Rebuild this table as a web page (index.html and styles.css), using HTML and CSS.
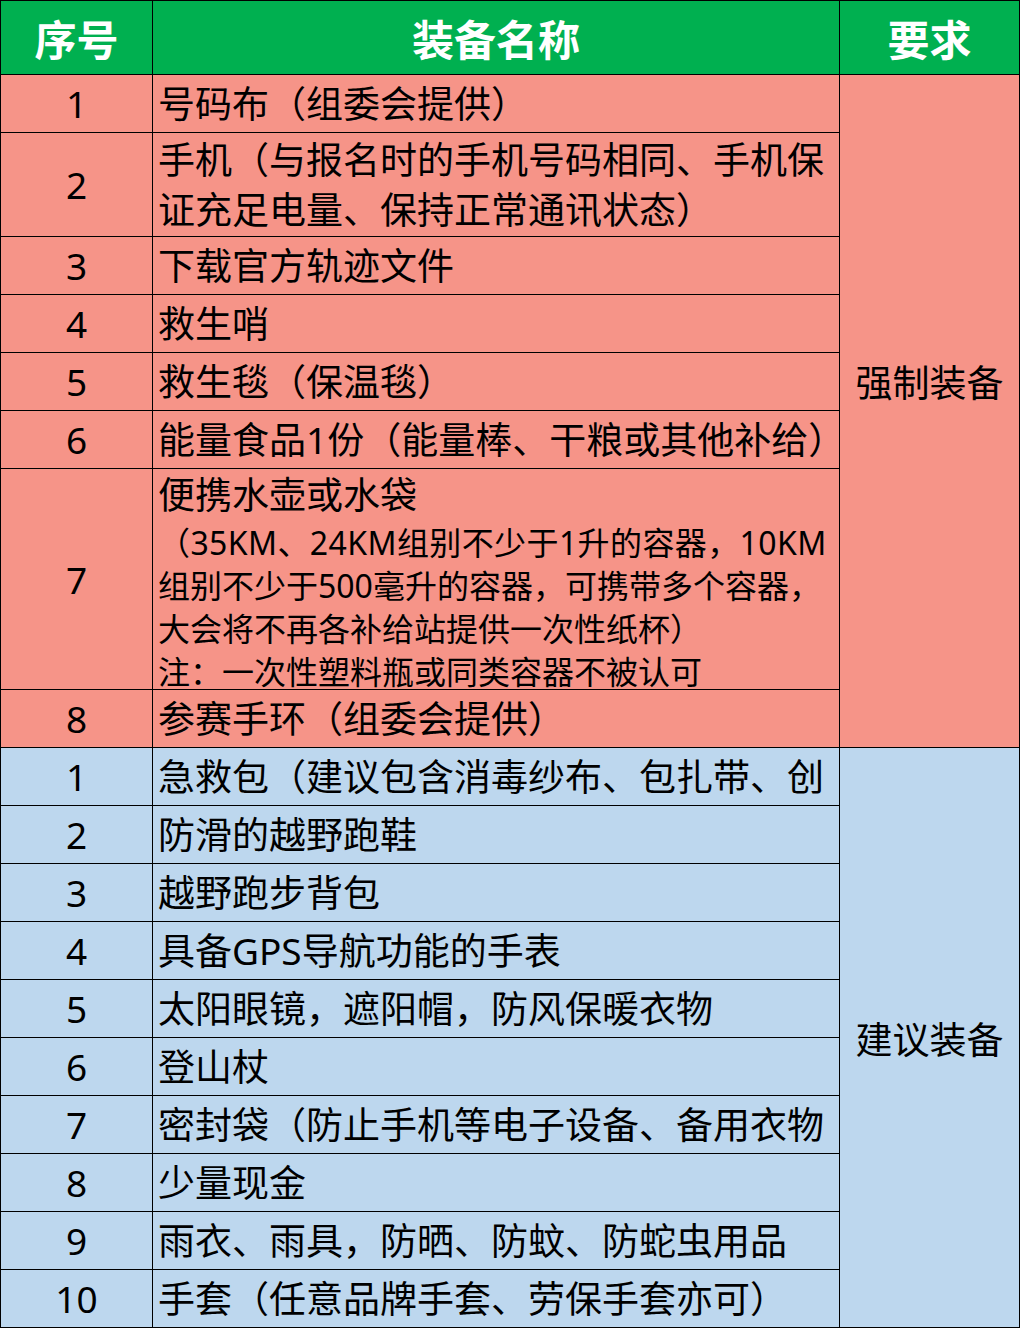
FILE: index.html
```html
<!DOCTYPE html>
<html lang="zh-CN">
<head>
<meta charset="utf-8">
<title>装备清单</title>
<link rel="stylesheet" href="styles.css">
</head>
<body>
<div class="sheet">
  <div class="hd">序号</div>
  <div class="hd">装备名称</div>
  <div class="hd">要求</div>

  <div class="num red">1</div>
  <div class="name red">号码布（组委会提供）</div>
  <div class="req red req-must">强制装备</div>

  <div class="num red">2</div>
  <div class="name red multi">手机（与报名时的手机号码相同、手机保<br>证充足电量、保持正常通讯状态）</div>

  <div class="num red">3</div>
  <div class="name red">下载官方轨迹文件</div>

  <div class="num red">4</div>
  <div class="name red">救生哨</div>

  <div class="num red">5</div>
  <div class="name red">救生毯（保温毯）</div>

  <div class="num red">6</div>
  <div class="name red">能量食品1份（能量棒、干粮或其他补给）</div>

  <div class="num red">7</div>
  <div class="name red long">
    <div class="l1">便携水壶或水袋</div>
    <div class="ls wide">（35KM、24KM组别不少于1升的容器，10KM</div>
    <div class="ls">组别不少于500毫升的容器，可携带多个容器，</div>
    <div class="ls">大会将不再各补给站提供一次性纸杯）</div>
    <div class="ls">注：一次性塑料瓶或同类容器不被认可</div>
  </div>

  <div class="num red">8</div>
  <div class="name red">参赛手环（组委会提供）</div>

  <div class="num blue">1</div>
  <div class="name blue">急救包（建议包含消毒纱布、包扎带、创</div>
  <div class="req blue">建议装备</div>

  <div class="num blue">2</div>
  <div class="name blue">防滑的越野跑鞋</div>

  <div class="num blue">3</div>
  <div class="name blue">越野跑步背包</div>

  <div class="num blue">4</div>
  <div class="name blue">具备GPS导航功能的手表</div>

  <div class="num blue">5</div>
  <div class="name blue">太阳眼镜，遮阳帽，防风保暖衣物</div>

  <div class="num blue">6</div>
  <div class="name blue">登山杖</div>

  <div class="num blue">7</div>
  <div class="name blue">密封袋（防止手机等电子设备、备用衣物</div>

  <div class="num blue">8</div>
  <div class="name blue">少量现金</div>

  <div class="num blue">9</div>
  <div class="name blue">雨衣、雨具，防晒、防蚊、防蛇虫用品</div>

  <div class="num blue">10</div>
  <div class="name blue">手套（任意品牌手套、劳保手套亦可）</div>
</div>
</body>
</html>
```

FILE: styles.css
```css
html, body {
  margin: 0;
  padding: 0;
  background: #ffffff;
}

.sheet {
  display: grid;
  grid-template-columns: 151px 686px 179px;
  grid-template-rows: 73px 57px 103px 57px 57px 57px 57px 220px 57px repeat(10, 57px);
  gap: 1px;
  padding: 1px;
  width: max-content;
  background: #000000;
  font-family: "Noto Sans", "Noto Sans CJK SC", sans-serif;
  color: #000000;
}

.hd {
  background: #00b050;
  color: #ffffff;
  font-family: "Noto Sans CJK SC", sans-serif;
  font-weight: 700;
  font-size: 42px;
  display: flex;
  align-items: center;
  justify-content: center;
}

.red { background: #f69488; }
.blue { background: #bdd7ee; }

.num {
  display: flex;
  align-items: center;
  justify-content: center;
  font-size: 37px;
}

.name {
  display: flex;
  align-items: center;
  padding-left: 5px;
  font-size: 37px;
  line-height: 50px;
  white-space: nowrap;
  min-width: 0;
}

.name.long {
  display: block;
}

.long .l1 {
  font-size: 37px;
  line-height: 52px;
}

.long .ls {
  font-size: 32px;
  line-height: 43px;
}

.long .wide {
  letter-spacing: 0.4px;
}

.req {
  grid-row: span 10;
  display: flex;
  align-items: center;
  justify-content: center;
  font-size: 37px;
  white-space: nowrap;
}

.req-must {
  grid-row: span 8;
  padding-bottom: 60px;
}
```
